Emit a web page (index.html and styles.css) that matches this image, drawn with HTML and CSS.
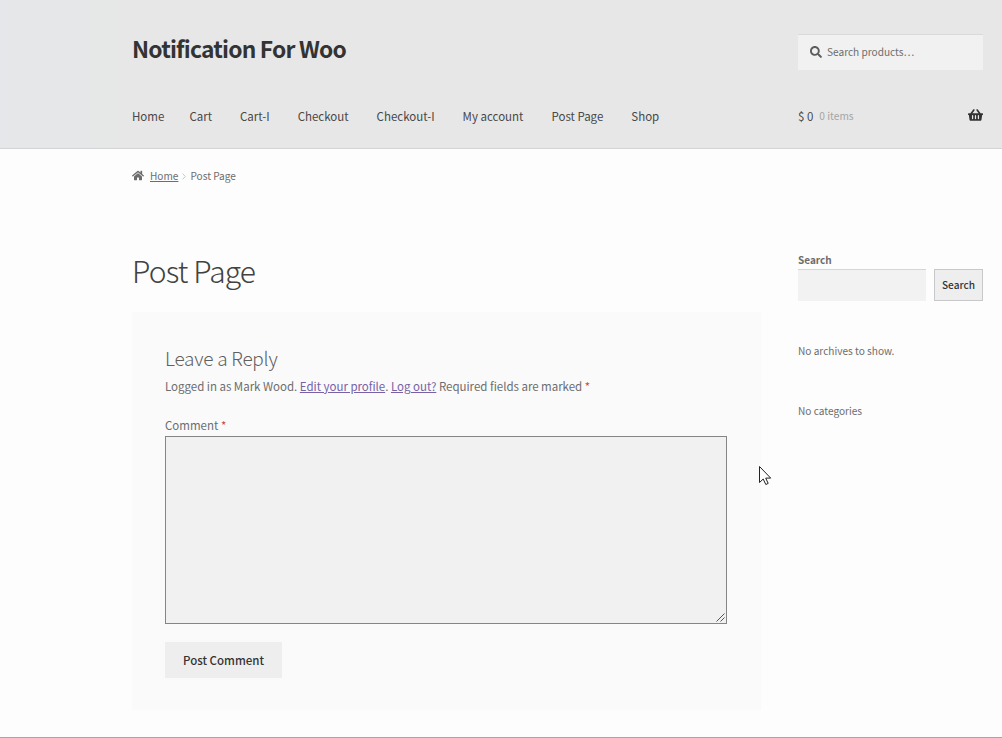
FILE: index.html
```html
<!DOCTYPE html>
<html lang="en">
<head>
<meta charset="utf-8">
<title>Post Page – Notification For Woo</title>
<link rel="stylesheet" href="styles.css">
</head>
<body>
<header class="site-header">
  <div class="wrap branding">
    <div class="site-title"><span>Notification For Woo</span></div>
    <div class="product-search">
      <svg class="search-icon" viewBox="0 0 512 512"><path d="M505 442.700 405.300 343c-4.500-4.500-10.600-7-17-7H372c27.600-35.300 44-79.700 44-128C416 93.100 322.900 0 208 0S0 93.100 0 208s93.100 208 208 208c48.300 0 92.700-16.400 128-44v16.300c0 6.400 2.500 12.500 7 17l99.700 99.700c9.400 9.400 24.600 9.400 33.900 0l28.300-28.300c9.400-9.400 9.400-24.600.1-34zM208 336c-70.700 0-128-57.200-128-128 0-70.700 57.200-128 128-128 70.700 0 128 57.200 128 128 0 70.700-57.200 128-128 128z"/></svg>
      <span>Search products…</span>
    </div>
  </div>
  <div class="wrap navigation">
    <nav class="menu">
      <a class="first">Home</a><a>Cart</a><a>Cart-I</a><a>Checkout</a><a>Checkout-I</a><a>My account</a><a>Post Page</a><a>Shop</a>
    </nav>
    <div class="cart">
      <span class="amount">$ 0</span><span class="count">0 items</span>
      <svg class="basket" viewBox="0 0 576 512"><path fill-rule="evenodd" d="M576 216v16c0 13.300-10.700 24-24 24h-8l-26.100 182.800c-3.400 23.600-23.700 41.200-47.500 41.200H105.600c-23.800 0-44.100-17.600-47.500-41.200L32 256h-8c-13.300 0-24-10.700-24-24v-16c0-13.300 10.700-24 24-24h67.300L198.500 44.600c10.400-14.300 30.400-17.500 44.700-7.100 14.300 10.400 17.500 30.400 7.100 44.700L170.500 192h235l-79.800-109.800c-10.400-14.300-7.300-34.300 7.100-44.700 14.300-10.400 34.300-7.200 44.700 7.100L484.700 192H552c13.300 0 24 10.700 24 24zM312 392V280c0-13.300-10.700-24-24-24s-24 10.700-24 24v112c0 13.300 10.700 24 24 24s24-10.700 24-24zm112 0V280c0-13.300-10.700-24-24-24s-24 10.700-24 24v112c0 13.300 10.700 24 24 24s24-10.700 24-24zm-224 0V280c0-13.300-10.700-24-24-24s-24 10.700-24 24v112c0 13.300 10.700 24 24 24s24-10.700 24-24z"/></svg>
    </div>
  </div>
</header>

<div class="wrap breadcrumb">
  <svg class="home-icon" viewBox="0 0 576 512"><path d="M280.400 148.300 96 300.100V464a16 16 0 0 0 16 16l112-.3a16 16 0 0 0 16-16V368a16 16 0 0 1 16-16h64a16 16 0 0 1 16 16v95.600a16 16 0 0 0 16 16l112 .3a16 16 0 0 0 16-16V300L295.700 148.300a12.200 12.200 0 0 0-15.300 0zM571.600 251.500 488 182.600V44a12 12 0 0 0-12-12h-56a12 12 0 0 0-12 12v72.600L318.500 43a48 48 0 0 0-61 0L4.300 251.500a12 12 0 0 0-1.600 16.900l25.500 31a12 12 0 0 0 16.900 1.600l235.300-193.700a12.200 12.200 0 0 1 15.300 0L530.900 301a12 12 0 0 0 16.900-1.600l25.500-31a12 12 0 0 0-1.700-16.900z"/></svg>
  <a class="crumb-home">Home</a>
  <svg class="chevron" viewBox="0 0 4 7"><path d="M.6.6 3.300 3.500.6 6.400"/></svg>
  <span>Post Page</span>
</div>

<div class="wrap content">
  <main class="primary">
    <h1 class="page-title"><span>Post Page</span></h1>
    <section class="respond">
      <h2 class="reply-title"><span>Leave a Reply</span></h2>
      <p class="logged-in">Logged in as Mark Wood. <a>Edit your profile</a>. <a>Log out?</a> Required fields are marked <b>*</b></p>
      <label class="comment-label">Comment <b>*</b></label>
      <div class="comment-box">
        <svg class="grip" viewBox="0 0 9 9"><path d="M.5 8.500 8.500.5M4.500 8.500l4-4"/></svg>
      </div>
      <div class="submit"><span>Post Comment</span></div>
    </section>
  </main>
  <aside class="sidebar">
    <div class="widget-label">Search</div>
    <div class="widget-search">
      <div class="field"></div>
      <div class="search-button"><span>Search</span></div>
    </div>
    <p class="archives">No archives to show.</p>
    <p class="categories">No categories</p>
  </aside>
</div>

<div class="bottom-line"></div>
<svg class="cursor" viewBox="0 0 13 20"><path d="M.5.5v16l3.700-3.500 2.600 5.500 2.400-1.100-2.500-5.300h5z"/></svg>
</body>
</html>
```
FILE: styles.css
```css
* { box-sizing: border-box; }
body {
  margin: 0;
  height: 738px;
  overflow: hidden;
  display: flex;
  flex-direction: column;
  background: #fdfdfd;
  color: #6d6d6d;
  font-family: "Noto Sans CJK SC", "Open Sans", sans-serif;
  font-size: 11.500px;
  line-height: 20px;
}
h1, h2, p { margin: 0; font-weight: 300; }
svg { display: block; flex: none; }
.wrap { width: 851px; margin-left: 132px; display: flex; }

.site-header {
  height: 149px;
  flex: none;
  background: linear-gradient(90deg, #e6e7ea, #e7e7e7 130px);
  border-bottom: 1px solid #d4d4d7;
}
.branding { justify-content: space-between; padding-top: 34px; height: 98px; }
.site-title { font-size: 22.800px; font-weight: 700; line-height: 29px; color: #333; letter-spacing: -0.780px; }
.product-search {
  width: 185px;
  height: 36px;
  display: flex;
  align-items: center;
  gap: 5px;
  padding: 0 0 2px 12px;
  background: #f1f1f1;
  border-top: 1px solid #dadada;
  font-size: 10.100px;
}
.search-icon { width: 12px; height: 12px; fill: #5d5d5d; }
.navigation { justify-content: space-between; height: 36px; align-items: center; }
.menu { display: flex; gap: 28px; color: #484848; }
.menu .first { margin-right: -3px; }
.cart { width: 185px; display: flex; align-items: center; color: #484848; }
.count { margin-left: 6px; font-size: 10.200px; color: #a5a5a5; }
.basket { width: 15px; height: 14px; margin: 0 0 2px auto; fill: #333; }

.breadcrumb { height: 54px; align-items: center; font-size: 10.100px; flex: none; }
.home-icon { width: 12px; height: 11px; fill: #6d6d6d; margin: 0 6px 1px 0; }
.breadcrumb a { text-decoration: underline; }
.chevron { width: 4px; height: 7px; margin: 0 4px; fill: none; stroke: #c8c8c8; }

.content { justify-content: space-between; align-items: flex-start; }
.primary { width: 629px; padding-top: 47px; }
.page-title { font-size: 30px; line-height: 40px; color: #424242; margin-bottom: 22px; letter-spacing: -0.850px; }
.respond { height: 398px; background: #fafafb; padding: 33px 34px 0 33px; }
.reply-title { font-size: 19px; line-height: 26px; color: #606060; letter-spacing: -0.250px; }
.logged-in { font-weight: 400; margin-top: 5px; letter-spacing: -0.020px; }
.logged-in a { color: #7761a5; text-decoration: underline; }
b { font-weight: 400; color: #d0443f; }
.comment-label { display: block; margin-top: 19px; padding-bottom: 1px; }
.comment-box {
  height: 188px;
  width: 562px;
  background: #f1f1f1;
  border: 1px solid #858585;
  display: flex;
  align-items: flex-end;
  justify-content: flex-end;
  padding: 1px;
}
.grip { width: 9px; height: 9px; fill: none; stroke: #555; }
.submit {
  width: 117px;
  height: 36px;
  margin-top: 18px;
  background: #eee;
  color: #333;
  font-weight: 500;
  display: flex;
  align-items: center;
  justify-content: center;
}

.sidebar { width: 185px; padding-top: 47px; font-size: 10.100px; }
.widget-label { font-weight: 700; line-height: 19px; font-size: 10px; }
.widget-search { display: flex; gap: 8px; height: 32px; }
.field { width: 128px; background: #f2f2f2; border-top: 1px solid #d6d6d6; }
.search-button {
  width: 49px;
  background: #eee;
  border: 1px solid #c8c8cb;
  color: #333;
  font-weight: 500;
  display: flex;
  align-items: center;
  justify-content: center;
}
.archives, .categories { font-weight: 400; }
.archives { margin-top: 40px; }
.categories { margin-top: 40px; }

.bottom-line { margin-top: auto; height: 1px; flex: none; background: #a5a5a5; }
.cursor { position: absolute; left: 759px; top: 466px; width: 13px; height: 20px; fill: #fff; stroke: #222; }
```
